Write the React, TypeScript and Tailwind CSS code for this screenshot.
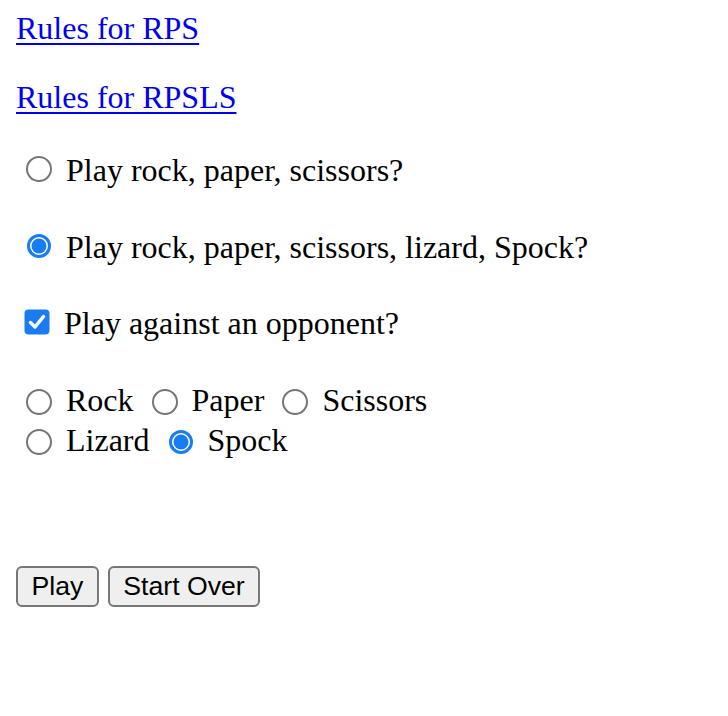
import React, { useState } from "react";

const serif = "font-['Liberation_Serif','Times_New_Roman',serif]";

const Radio = ({ checked }: { checked: boolean }) => (
  <svg width="26" height="26" viewBox="0 0 26 26" className="shrink-0">
    {checked ? (
      <>
        <circle cx="13" cy="13" r="10.5" fill="white" stroke="#1a7cf4" strokeWidth="3" />
        <circle cx="13" cy="13" r="7.5" fill="#1a7cf4" />
      </>
    ) : (
      <circle cx="13" cy="13" r="12" fill="white" stroke="#767676" strokeWidth="2" />
    )}
  </svg>
);

const Checkbox = ({ checked }: { checked: boolean }) => (
  <svg width="26" height="26" viewBox="0 0 26 26" className="shrink-0">
    {checked ? (
      <>
        <rect x="0.5" y="0.5" width="25" height="25" rx="4" fill="#1a7cf4" />
        <path
          d="M6.5 13.5 L11 18 L19.5 7.5"
          fill="none"
          stroke="white"
          strokeWidth="3.5"
          strokeLinecap="round"
          strokeLinejoin="round"
        />
      </>
    ) : (
      <rect x="1" y="1" width="24" height="24" rx="4" fill="white" stroke="#767676" strokeWidth="2" />
    )}
  </svg>
);

const moves = [
  ["Rock", "Paper", "Scissors"],
  ["Lizard", "Spock"],
];

export default function App() {
  const [mode, setMode] = useState<"rps" | "rpsls">("rpsls");
  const [opponent, setOpponent] = useState(true);
  const [move, setMove] = useState("Spock");

  return (
    <div className={`${serif} min-h-[716px] bg-white px-4 pt-[10px] text-[32px] leading-[37px] text-black`}>
      <div>
        <a href="#" className="text-[#0000ee] underline decoration-2 underline-offset-[4px]">
          Rules for RPS
        </a>
      </div>
      <div className="mt-8">
        <a href="#" className="text-[#0000ee] underline decoration-2 underline-offset-[4px]">
          Rules for RPSLS
        </a>
      </div>

      <label className="mt-9 flex cursor-default items-start" onClick={() => setMode("rps")}>
        <span className="ml-[10px] mr-[14px] mt-1">
          <Radio checked={mode === "rps"} />
        </span>
        <span>Play rock, paper, scissors?</span>
      </label>

      <label className="mt-10 flex cursor-default items-start" onClick={() => setMode("rpsls")}>
        <span className="ml-[10px] mr-[14px] mt-1">
          <Radio checked={mode === "rpsls"} />
        </span>
        <span>Play rock, paper, scissors, lizard, Spock?</span>
      </label>

      <label className="mt-[39px] flex cursor-default items-start" onClick={() => setOpponent(!opponent)}>
        <span className="ml-2 mr-[14px] mt-1">
          <Checkbox checked={opponent} />
        </span>
        <span>Play against an opponent?</span>
      </label>

      <div className="mt-10 flex flex-col gap-[3px]">
        {moves.map((row, i) => (
          <div key={i} className="flex items-start gap-2">
            {row.map((m) => (
              <label key={m} className="flex cursor-default items-start" onClick={() => setMove(m)}>
                <span className="ml-[10px] mr-[14px] mt-[7px]">
                  <Radio checked={move === m} />
                </span>
                <span>{m}</span>
              </label>
            ))}
          </div>
        ))}
      </div>

      <div className="mt-[107px] flex gap-[9px] font-['Liberation_Sans',Arial,sans-serif] text-[26.67px] leading-none">
        <button className="flex h-[41px] w-[83px] items-center justify-center rounded-[6px] border-2 border-[#767676] bg-[#efefef] pb-[1px]">
          Play
        </button>
        <button className="flex h-[41px] w-[152px] items-center justify-center rounded-[6px] border-2 border-[#767676] bg-[#efefef] pb-[1px]">
          Start Over
        </button>
      </div>
    </div>
  );
}
